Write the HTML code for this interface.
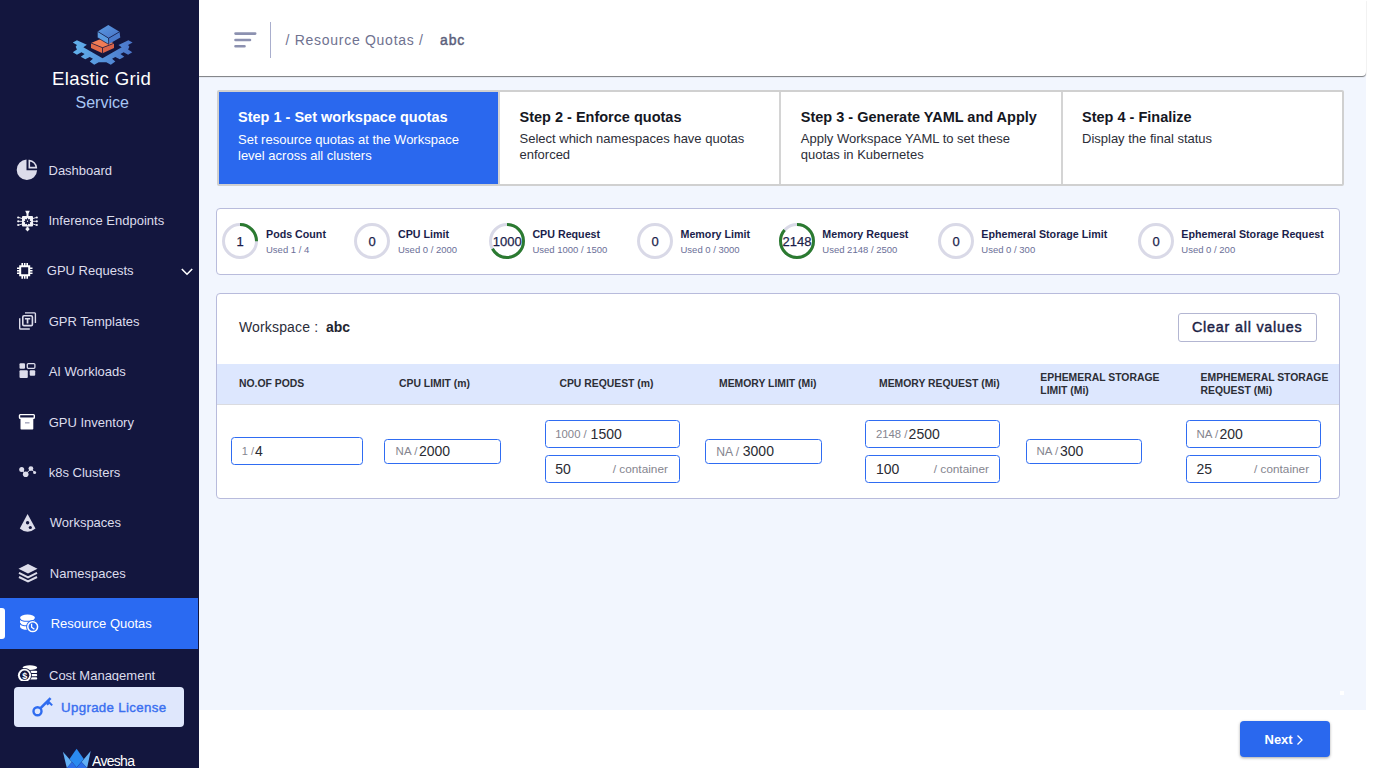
<!DOCTYPE html>
<html><head><meta charset="utf-8">
<style>
*{box-sizing:border-box;margin:0;padding:0}
html,body{width:1375px;height:782px;overflow:hidden;background:#fff;font-family:"Liberation Sans",sans-serif}
.a{position:absolute;white-space:nowrap;line-height:1}
#side{position:absolute;left:0;top:0;width:199px;height:768px;background:#13163e;overflow:hidden}
#content{position:absolute;left:199px;top:0;width:1167px;height:710px;background:#f2f6fe}
#header{position:absolute;left:199px;top:0;width:1167px;height:76px;background:#fff;border-bottom-right-radius:4px;box-shadow:0 1px 1px -0.3px rgba(0,0,0,.5)}
.mi{position:absolute;left:0;font-size:13px;color:#dcdcec;line-height:1}
.mi svg{position:absolute}
#stepper{position:absolute;left:217px;top:90px;width:1127px;height:96px;border:2px solid #d0d0d0;border-radius:2px;background:#fff;display:flex}
.step{position:relative;height:100%;border-right:2px solid #d4d4d4}
.step:last-child{border-right:none}
.st{position:absolute;font-size:14.5px;font-weight:bold;line-height:1;white-space:nowrap;color:#15171f}
.ss{position:absolute;font-size:13px;line-height:16px;white-space:nowrap;color:#2c2e38}
#quota{position:absolute;left:216px;top:208px;width:1124px;height:67px;background:#fff;border:1px solid #b9bcdc;border-radius:4px}
.qc{position:absolute;top:223px;width:36px;height:36px}
.qn{position:absolute;font-size:13px;color:#1b1e4b;-webkit-text-stroke:0.25px #1b1e4b;line-height:1;text-align:center;width:60px}
.qt{position:absolute;font-size:10.7px;font-weight:bold;color:#1b1e4b;line-height:1;white-space:nowrap}
.qs{position:absolute;font-size:9.5px;color:#6b6f98;line-height:1;white-space:nowrap}
#ws{position:absolute;left:216px;top:293px;width:1124px;height:206px;background:#fff;border:1px solid #b8bbdc;border-radius:4px;overflow:hidden}
#thead{position:absolute;left:217px;top:364px;width:1122px;height:41px;background:#dde7fe;border-bottom:1px solid #dadbe0}
.th{position:absolute;font-size:10.4px;font-weight:bold;color:#2c2e36;line-height:1;white-space:nowrap}
.in{position:absolute;border:1.5px solid #2f6cf2;border-radius:3.5px;background:#fff}
.sm{position:absolute;font-size:10.5px;color:#8a8a92;line-height:1;white-space:nowrap}
.val{position:absolute;font-size:13.5px;color:#222;line-height:1;white-space:nowrap}
</style></head><body>
<div id="content"></div>
<div id="header">
<svg style="position:absolute;left:33.7px;top:31px" width="25" height="18" viewBox="0 0 25 18">
<path fill="none" stroke="#8c91b0" stroke-width="2.6" stroke-linecap="round" d="M2.5,2.6 H22.2 M2.5,9 H17 M2.5,15.3 H11.5"/>
</svg>
<div style="position:absolute;left:70.5px;top:22px;width:1.3px;height:36px;background:#a9aecd"></div>
<div class="a" style="left:86.5px;top:33.3px;font-size:14px;color:#6f7290;letter-spacing:0.72px">/ Resource Quotas /</div>
<div class="a" style="left:241px;top:33.3px;font-size:14px;color:#5c5f7c;letter-spacing:0.9px;-webkit-text-stroke:0.45px #5c5f7c">abc</div>
</div>
<div id="side">
<svg style="position:absolute;left:68px;top:20px" width="70" height="50" viewBox="0 0 70 50">
<defs><linearGradient id="gg" x1="0" y1="0" x2="1" y2="0"><stop offset="0" stop-color="#62b2ec"/><stop offset="1" stop-color="#4a74c9"/></linearGradient>
<linearGradient id="bt" x1="0" y1="0" x2="1" y2="1"><stop offset="0" stop-color="#5a9be2"/><stop offset="1" stop-color="#4872c6"/></linearGradient></defs>
<path fill="url(#gg)" d="M4.80,22.51 L8.95,20.33 L18.86,24.81 L15.35,27.17 L34.53,38.24 L53.71,27.17 L50.51,25.06 L60.42,20.33 L64.58,22.51 L60.10,24.94 L61.38,26.85 L60.10,29.41 L64.26,32.29 L60.10,34.85 L55.63,32.29 L52.43,33.89 L56.27,36.76 L51.79,39.32 L47.31,37.08 L44.12,38.68 L47.31,41.56 L42.84,44.76 L38.36,42.20 L30.69,42.20 L26.21,44.76 L21.74,41.56 L24.94,38.68 L21.74,37.08 L17.26,39.32 L12.79,36.76 L16.62,33.89 L13.43,32.29 L8.95,34.85 L4.80,32.29 L8.95,29.41 L7.67,26.85 L8.95,24.94 Z"/>
<path fill="#f07c56" d="M23,23 L34.5,18.3 L46,23.3 L34.5,27.7 Z"/>
<path fill="#e36b4a" d="M23,23 L34.5,27.7 L34.5,33.2 L23,28.1 Z"/>
<path fill="#d8634a" d="M34.5,27.7 L46,23.3 L46,28.1 L34.5,33.2 Z"/>
<path fill="url(#bt)" d="M40.3,5 L51.5,11.8 L40.6,18.2 L29.7,11.5 Z"/>
<path fill="#5c9ce0" d="M29.7,11.5 L40.6,18.2 L40.6,24.3 L29.7,17.8 Z"/>
<path fill="#4a7acb" d="M40.6,18.2 L51.5,11.8 L52.3,17.5 L40.6,24.3 Z"/>
<path fill="none" stroke="#13163e" stroke-width="0.7" d="M29.7,11.5 L40.6,18.2 L51.5,11.8 M40.6,18.2 L40.6,24.3 M23,23 L34.5,27.7 L46,23.3 M34.5,27.7 L34.5,33.2 M29.7,17.8 L40.6,24.3"/>
</svg>
<div class="a" style="left:52px;top:70.4px;font-size:18.6px;color:#fff;letter-spacing:0.35px">Elastic Grid</div>
<div class="a" style="left:75.5px;top:94.5px;font-size:16px;color:#a8c6f4">Service</div>
<!-- menu -->
<svg style="position:absolute;left:16px;top:159px" width="22" height="22" viewBox="0 0 22 22">
<path fill="#dcdcea" d="M10.5,0.6 A10.2,10.2 0 1 0 21.1,11.2 L10.5,11.2 Z"/>
<path fill="none" stroke="#dcdcea" stroke-width="1.6" d="M13.3,1.6 A7.6,7.6 0 0 1 20.3,8.6 L13.3,8.6 Z"/>
</svg>
<div class="mi" style="left:48.5px;top:163.7px">Dashboard</div>

<svg style="position:absolute;left:16px;top:210px" width="22" height="22" viewBox="0 0 22 22">
<rect x="6" y="6" width="11" height="10.5" rx="1" fill="#f4f4f8"/>
<path fill="#13163e" d="M11.5,7.8 l0.9,1.6 1.7,-0.5 -0.3,1.8 1.6,0.8 -1.6,0.9 0.3,1.8 -1.7,-0.5 -0.9,1.6 -0.9,-1.6 -1.7,0.5 0.3,-1.8 -1.6,-0.9 1.6,-0.8 -0.3,-1.8 1.7,0.5 Z"/>
<circle cx="11.5" cy="11.3" r="0.7" fill="#f4f4f8"/>
<path fill="#f4f4f8" d="M9.2,0.8 h4.6 l-1.3,3 v2.2 h-2 v-2.2 Z"/>
<path fill="#f4f4f8" d="M10.5,16.5 h2 v1.5 l1.3,1 -2.3,2.4 -2.3,-2.4 1.3,-1 Z"/>
<path fill="none" stroke="#f4f4f8" stroke-width="0.9" d="M6,8.5 L3,7.6 M6,11.3 H2.6 M6,14 L3,15 M17,8.5 L20,7.6 M17,11.3 H20.4 M17,14 L20,15"/>
<circle cx="2.2" cy="7.5" r="1.1" fill="#f4f4f8"/><circle cx="2.2" cy="11.3" r="1.1" fill="#f4f4f8"/><circle cx="2.2" cy="15" r="1.1" fill="#f4f4f8"/>
<circle cx="20.8" cy="7.5" r="1.1" fill="#f4f4f8"/><circle cx="20.8" cy="11.3" r="1.1" fill="#f4f4f8"/><circle cx="20.8" cy="15" r="1.1" fill="#f4f4f8"/>
</svg>
<div class="mi" style="left:48.5px;top:214.4px">Inference Endpoints</div>

<svg style="position:absolute;left:16px;top:262px" width="18" height="18" viewBox="0 0 18 18">
<path fill="none" stroke="#fff" stroke-width="2" d="M4.2,4.2 H13.2 V13.2 H4.2 Z"/>
<path fill="none" stroke="#fff" stroke-width="1.6" d="M6.2,1 V4 M8.7,1 V4 M11.2,1 V4 M6.2,13.5 V16.8 M8.7,13.5 V16.8 M11.2,13.5 V16.8 M1,6.2 H4 M1,8.7 H4 M1,11.2 H4 M13.5,6.2 H16.5 M13.5,8.7 H16.5 M13.5,11.2 H16.5"/>
</svg>
<div class="mi" style="left:46.8px;top:264px">GPU Requests</div>
<svg style="position:absolute;left:180px;top:267px" width="14" height="10" viewBox="0 0 14 10">
<path fill="none" stroke="#fff" stroke-width="1.6" d="M1.8,2 L7,7.2 L12.2,2"/>
</svg>

<svg style="position:absolute;left:17px;top:310px" width="21" height="21" viewBox="0 0 21 21">
<rect x="5.8" y="5.8" width="9.6" height="9.8" rx="1.2" fill="none" stroke="#dcdcea" stroke-width="1.6"/>
<path fill="none" stroke="#dcdcea" stroke-width="1.4" d="M8,2.9 H17.6 Q18.4,2.9 18.4,3.7 V13 M2.7,8.3 V18.2 Q2.7,19 3.5,19 H12.8"/>
<path fill="#dcdcea" d="M7.9,8 H13.2 V9.6 H11.4 V13.5 H9.7 V9.6 H7.9 Z"/>
</svg>
<div class="mi" style="left:48.7px;top:315px">GPR Templates</div>

<svg style="position:absolute;left:18px;top:362px" width="19" height="17" viewBox="0 0 19 17">
<rect x="1.5" y="1.2" width="5.5" height="5.5" rx="1" fill="#dcdcea"/>
<rect x="9.3" y="1.6" width="7.6" height="4.7" rx="1" fill="none" stroke="#dcdcea" stroke-width="1.3"/>
<rect x="1.5" y="8.2" width="8.3" height="7.8" rx="1" fill="#dcdcea"/>
<rect x="11.7" y="8.2" width="5.5" height="5.5" rx="1" fill="#dcdcea"/>
</svg>
<div class="mi" style="left:48.7px;top:365.3px">AI Workloads</div>

<svg style="position:absolute;left:18px;top:413px" width="18" height="18" viewBox="0 0 18 18">
<rect x="1.5" y="1.6" width="14.8" height="3.6" rx="0.8" fill="none" stroke="#fff" stroke-width="1.4"/>
<rect x="2.5" y="5.6" width="12.8" height="11" rx="0.8" fill="#fff"/>
<rect x="7" y="9.3" width="4.5" height="1.1" fill="#8b8da8"/>
</svg>
<div class="mi" style="left:48.7px;top:416px">GPU Inventory</div>

<svg style="position:absolute;left:18px;top:464px" width="19" height="16" viewBox="0 0 19 16">
<path fill="none" stroke="#dcdcea" stroke-width="1" d="M3.5,5.5 L7.5,10 L13,5 L16.7,8.3"/>
<circle cx="3.7" cy="5.4" r="2.5" fill="#dcdcea"/>
<circle cx="7.7" cy="10.3" r="2.8" fill="#dcdcea"/>
<circle cx="12.9" cy="4.6" r="2.4" fill="#dcdcea"/>
<circle cx="16.6" cy="8.5" r="1.5" fill="#dcdcea"/>
</svg>
<div class="mi" style="left:48.7px;top:466px">k8s Clusters</div>

<svg style="position:absolute;left:18px;top:512px" width="19" height="21" viewBox="0 0 19 21">
<path fill="#dcdcea" d="M9.6,2 L17.5,16.5 Q13.5,19.8 9.6,19.8 Q5.6,19.8 1.8,16.5 Z"/>
<circle cx="9.6" cy="10.8" r="1.7" fill="#13163e"/>
<circle cx="12.3" cy="15.5" r="1.6" fill="#13163e"/>
</svg>
<div class="mi" style="left:49.8px;top:516px">Workspaces</div>

<svg style="position:absolute;left:17px;top:561px" width="22" height="23" viewBox="0 0 22 23">
<path fill="#dcdcea" d="M11,3 L20.5,7.8 L11,12.5 L1.5,7.8 Z"/>
<path fill="none" stroke="#dcdcea" stroke-width="2" d="M2,11.8 L11,16.3 L20,11.8 M2,16 L11,20.5 L20,16"/>
</svg>
<div class="mi" style="left:49.8px;top:567px">Namespaces</div>

<div style="position:absolute;left:0;top:598px;width:198px;height:51px;background:#2a6af2"></div>
<div style="position:absolute;left:0;top:608px;width:5px;height:31px;background:#fff;border-radius:0 3px 3px 0"></div>
<svg style="position:absolute;left:18px;top:612px" width="22" height="23" viewBox="0 0 22 23">
<path fill="#fff" d="M2.1,5.7 A7.4,3.1 0 0 1 16.9,5.7 V14.8 A7.4,3 0 0 1 2.1,14.8 Z"/>
<path fill="none" stroke="#2a6af2" stroke-width="1.1" d="M2.1,6.4 A7.4,2.9 0 0 0 16.9,6.4 M2.1,10.9 A7.4,2.9 0 0 0 16.9,10.9"/>
<circle cx="14.7" cy="14.7" r="6.6" fill="#2a6af2"/>
<circle cx="14.7" cy="14.7" r="4.9" fill="#2a6af2" stroke="#fff" stroke-width="1.5"/>
<path fill="none" stroke="#fff" stroke-width="1.3" d="M13.6,11.7 V15.2 L16.4,17.3"/>
</svg>
<div class="mi" style="left:50.7px;top:617px;color:#fff">Resource Quotas</div>

<div style="position:absolute;left:0;top:655px;width:199px;height:26px;overflow:hidden">
<svg style="position:absolute;left:17px;top:10px" width="22" height="18" viewBox="0 0 22 18">
<ellipse cx="12.9" cy="2.6" rx="7.3" ry="2.4" fill="#fff"/>
<rect x="12.5" y="5.8" width="7.7" height="2.3" rx="1" fill="#fff"/>
<rect x="12.5" y="9" width="7.7" height="2.3" rx="1" fill="#fff"/>
<rect x="12.5" y="12.2" width="7.7" height="2.3" rx="1" fill="#fff"/>
<circle cx="7.5" cy="10.3" r="7.4" fill="#13163e"/>
<circle cx="7.5" cy="10.3" r="6.6" fill="#fff"/>
<circle cx="7.6" cy="10.3" r="4.7" fill="#13163e"/>
<text x="7.7" y="13.5" font-size="9" font-weight="bold" text-anchor="middle" fill="#fff" font-family="Liberation Sans">$</text>
</svg>
<div class="mi" style="left:49px;top:13.8px">Cost Management</div>
</div>

<div style="position:absolute;left:14px;top:687px;width:170px;height:40px;background:#dfe7fc;border-radius:4px"></div>
<svg style="position:absolute;left:31px;top:696px" width="24" height="22" viewBox="0 0 24 22">
<circle cx="6.5" cy="15.2" r="4" fill="none" stroke="#2f6cf0" stroke-width="2.4"/>
<path fill="none" stroke="#2f6cf0" stroke-width="2.6" d="M9.3,12.4 L19.6,2.1"/>
<path fill="#2f6cf0" d="M17.5,4.3 L21.9,8.7 L20.5,10.1 L18.3,7.9 L16.7,9.5 L15.2,8 Z"/>
</svg>
<div class="a" style="left:61px;top:700.9px;font-size:13.3px;color:#3a6ff0;letter-spacing:0.33px;-webkit-text-stroke:0.4px #3a6ff0">Upgrade License</div>
<svg style="position:absolute;left:62px;top:748px" width="30" height="20" viewBox="0 0 30 20">
<path fill="#62b0f5" d="M0.9,3.8 L10,14 L4.8,20 Z"/>
<path fill="#62b0f5" d="M28.7,3 L19.5,14 L25.1,20 Z"/>
<path fill="#2a8af0" d="M14.6,0.8 L7.5,11 L14.6,19.5 L21.8,11 Z"/>
<path fill="#2d6ee8" d="M4.8,20 L10,14 L14.6,19.5 L19.5,14 L25.1,20 Z"/>
<path fill="#3a7ef2" d="M7.5,11 L14.6,19.5 L10,14 Z"/>
</svg>
<div class="a" style="left:92px;top:754px;font-size:14px;color:#fff;letter-spacing:-0.7px;transform:scaleY(1.1);transform-origin:0 100%">Avesha</div>

</div>

<div id="stepper">
<div class="step" style="width:279px;background:#2a68ee;height:92px;border-right:none"></div>
<div style="position:absolute;left:279px;top:-2px;width:2px;height:96px;background:#d4d4d4"></div>
<div style="position:absolute;left:560px;top:0px;width:2px;height:92px;background:#d4d4d4"></div>
<div style="position:absolute;left:842px;top:0px;width:2px;height:92px;background:#d4d4d4"></div>
</div>
<div class="st" style="left:238px;top:110px;color:#fff">Step 1 - Set workspace quotas</div>
<div class="ss" style="left:238px;top:131.8px;color:#fff">Set resource quotas at the Workspace<br>level across all clusters</div>
<div class="st" style="left:519.5px;top:110px">Step 2 - Enforce quotas</div>
<div class="ss" style="left:519.5px;top:131px">Select which namespaces have quotas<br>enforced</div>
<div class="st" style="left:800.8px;top:110px">Step 3 - Generate YAML and Apply</div>
<div class="ss" style="left:800.8px;top:131px">Apply Workspace YAML to set these<br>quotas in Kubernetes</div>
<div class="st" style="left:1082px;top:110px">Step 4 - Finalize</div>
<div class="ss" style="left:1082px;top:131px">Display the final status</div>

<div id="quota"></div>
<svg style="position:absolute;left:222px;top:223px" width="36" height="36" viewBox="0 0 36 36"><circle cx="18" cy="18" r="16.5" fill="none" stroke="#d9d9e7" stroke-width="3"/><circle cx="18" cy="18" r="16.5" fill="none" stroke="#2b7a30" stroke-width="3" stroke-dasharray="25.92 103.67" transform="rotate(-90 18 18)"/></svg>
<div class="qn" style="left:210px;top:235px">1</div>
<div class="qt" style="left:266px;top:228.8px">Pods Count</div>
<div class="qs" style="left:266px;top:244.7px">Used 1 / 4</div>
<svg style="position:absolute;left:354px;top:223px" width="36" height="36" viewBox="0 0 36 36"><circle cx="18" cy="18" r="16.5" fill="none" stroke="#d9d9e7" stroke-width="3"/></svg>
<div class="qn" style="left:342px;top:235px">0</div>
<div class="qt" style="left:398px;top:228.8px">CPU Limit</div>
<div class="qs" style="left:398px;top:244.7px">Used 0 / 2000</div>
<svg style="position:absolute;left:489.3px;top:223px" width="36" height="36" viewBox="0 0 36 36"><circle cx="18" cy="18" r="16.5" fill="none" stroke="#d9d9e7" stroke-width="3"/><circle cx="18" cy="18" r="16.5" fill="none" stroke="#2b7a30" stroke-width="3" stroke-dasharray="69.12 103.67" transform="rotate(-90 18 18)"/></svg>
<div class="qn" style="left:477.3px;top:235px">1000</div>
<div class="qt" style="left:532.4px;top:228.8px">CPU Request</div>
<div class="qs" style="left:532.4px;top:244.7px">Used 1000 / 1500</div>
<svg style="position:absolute;left:637px;top:223px" width="36" height="36" viewBox="0 0 36 36"><circle cx="18" cy="18" r="16.5" fill="none" stroke="#d9d9e7" stroke-width="3"/></svg>
<div class="qn" style="left:625px;top:235px">0</div>
<div class="qt" style="left:680.5px;top:228.8px">Memory Limit</div>
<div class="qs" style="left:680.5px;top:244.7px">Used 0 / 3000</div>
<svg style="position:absolute;left:779px;top:223px" width="36" height="36" viewBox="0 0 36 36"><circle cx="18" cy="18" r="16.5" fill="none" stroke="#d9d9e7" stroke-width="3"/><circle cx="18" cy="18" r="16.5" fill="none" stroke="#2b7a30" stroke-width="3" stroke-dasharray="89.08 103.67" transform="rotate(-90 18 18)"/></svg>
<div class="qn" style="left:767px;top:235px">2148</div>
<div class="qt" style="left:822.3px;top:228.8px">Memory Request</div>
<div class="qs" style="left:822.3px;top:244.7px">Used 2148 / 2500</div>
<svg style="position:absolute;left:938px;top:223px" width="36" height="36" viewBox="0 0 36 36"><circle cx="18" cy="18" r="16.5" fill="none" stroke="#d9d9e7" stroke-width="3"/></svg>
<div class="qn" style="left:926px;top:235px">0</div>
<div class="qt" style="left:981.3px;top:228.8px">Ephemeral Storage Limit</div>
<div class="qs" style="left:981.3px;top:244.7px">Used 0 / 300</div>
<svg style="position:absolute;left:1138px;top:223px" width="36" height="36" viewBox="0 0 36 36"><circle cx="18" cy="18" r="16.5" fill="none" stroke="#d9d9e7" stroke-width="3"/></svg>
<div class="qn" style="left:1126px;top:235px">0</div>
<div class="qt" style="left:1181.3px;top:228.8px">Ephemeral Storage Request</div>
<div class="qs" style="left:1181.3px;top:244.7px">Used 0 / 200</div>
<div id="ws"></div>
<div id="thead"></div>
<div class="a" style="left:239px;top:320px;font-size:14px;color:#2b2d3a;letter-spacing:0.15px">Workspace :</div>
<div class="a" style="left:326px;top:320px;font-size:14px;font-weight:bold;color:#23252f">abc</div>
<div style="position:absolute;left:1178px;top:313px;width:139px;height:29px;border:1px solid #b3b6d2;border-radius:3px;background:#fff"></div>
<div class="a" style="left:1192px;top:320.4px;font-size:14.3px;color:#1c1e45;letter-spacing:0.8px;-webkit-text-stroke:0.45px #1c1e45">Clear all values</div>
<div class="th" style="left:239px;top:378.8px">NO.OF PODS</div>
<div class="th" style="left:399px;top:378.8px">CPU LIMIT (m)</div>
<div class="th" style="left:559.4px;top:378.8px">CPU REQUEST (m)</div>
<div class="th" style="left:719px;top:378.8px">MEMORY LIMIT (Mi)</div>
<div class="th" style="left:879px;top:378.8px">MEMORY REQUEST (Mi)</div>
<div class="th" style="left:1040.3px;top:372px;line-height:12.6px">EPHEMERAL STORAGE<br>LIMIT (Mi)</div>
<div class="th" style="left:1200.6px;top:372px;line-height:12.6px">EMPHEMERAL STORAGE<br>REQUEST (Mi)</div>
<div class="in" style="left:231px;top:437px;width:132px;height:28px"></div>
<div class="a" style="left:241.8px;top:446.3px;font-size:11px;color:#85858f;">1 /</div>
<div class="a" style="left:254.9px;top:443.9px;font-size:14px;color:#2a2b33;">4</div>
<div class="in" style="left:384px;top:439px;width:117px;height:25px"></div>
<div class="a" style="left:395.6px;top:446.3px;font-size:11.5px;color:#85858f;">NA /</div>
<div class="a" style="left:419px;top:444.3px;font-size:14px;color:#2a2b33;">2000</div>
<div class="in" style="left:545px;top:420px;width:135px;height:28px"></div>
<div class="a" style="left:555.3px;top:428.9px;font-size:11.3px;color:#85858f;">1000 /</div>
<div class="a" style="left:590.6px;top:427.0px;font-size:14px;color:#2a2b33;">1500</div>
<div class="in" style="left:545px;top:455px;width:135px;height:28px"></div>
<div class="a" style="left:555.3px;top:461.9px;font-size:14px;color:#2a2b33;">50</div>
<div class="a" style="left:612.8px;top:463.5px;font-size:11.8px;color:#85858f;">/ container</div>
<div class="in" style="left:705px;top:439px;width:117px;height:25px"></div>
<div class="a" style="left:716.2px;top:445.7px;font-size:12.2px;color:#85858f;">NA /</div>
<div class="a" style="left:742.8px;top:444.3px;font-size:14px;color:#2a2b33;">3000</div>
<div class="in" style="left:865px;top:420px;width:135px;height:28px"></div>
<div class="a" style="left:875.9px;top:428.9px;font-size:11.3px;color:#85858f;">2148 /</div>
<div class="a" style="left:908.6px;top:427.0px;font-size:14px;color:#2a2b33;">2500</div>
<div class="in" style="left:865px;top:455px;width:135px;height:28px"></div>
<div class="a" style="left:875.9px;top:461.9px;font-size:14px;color:#2a2b33;">100</div>
<div class="a" style="left:933.8px;top:463.5px;font-size:11.8px;color:#85858f;">/ container</div>
<div class="in" style="left:1026px;top:439px;width:116px;height:25px"></div>
<div class="a" style="left:1036.5px;top:446.3px;font-size:11.5px;color:#85858f;">NA /</div>
<div class="a" style="left:1060px;top:444.3px;font-size:14px;color:#2a2b33;">300</div>
<div class="in" style="left:1186px;top:420px;width:135px;height:28px"></div>
<div class="a" style="left:1196.5px;top:428.8px;font-size:11.5px;color:#85858f;">NA /</div>
<div class="a" style="left:1219.5px;top:427.0px;font-size:14px;color:#2a2b33;">200</div>
<div class="in" style="left:1186px;top:455px;width:135px;height:28px"></div>
<div class="a" style="left:1196.5px;top:461.9px;font-size:14px;color:#2a2b33;">25</div>
<div class="a" style="left:1254px;top:463.5px;font-size:11.8px;color:#85858f;">/ container</div>
<div style="position:absolute;left:1240px;top:721px;width:90px;height:36px;background:#2a68ee;border-radius:4px;box-shadow:0 1px 3px rgba(0,0,0,.35)"></div>
<div class="a" style="left:1264.5px;top:733px;font-size:13px;font-weight:bold;color:#fff">Next</div>
<svg style="position:absolute;left:1296px;top:734px" width="8" height="12" viewBox="0 0 8 12"><path fill="none" stroke="#fff" stroke-width="1.3" d="M1.5,1.5 L6,6 L1.5,10.5"/></svg>
<div style="position:absolute;left:1340px;top:691px;width:4px;height:4px;background:#fff"></div>
</body></html>
